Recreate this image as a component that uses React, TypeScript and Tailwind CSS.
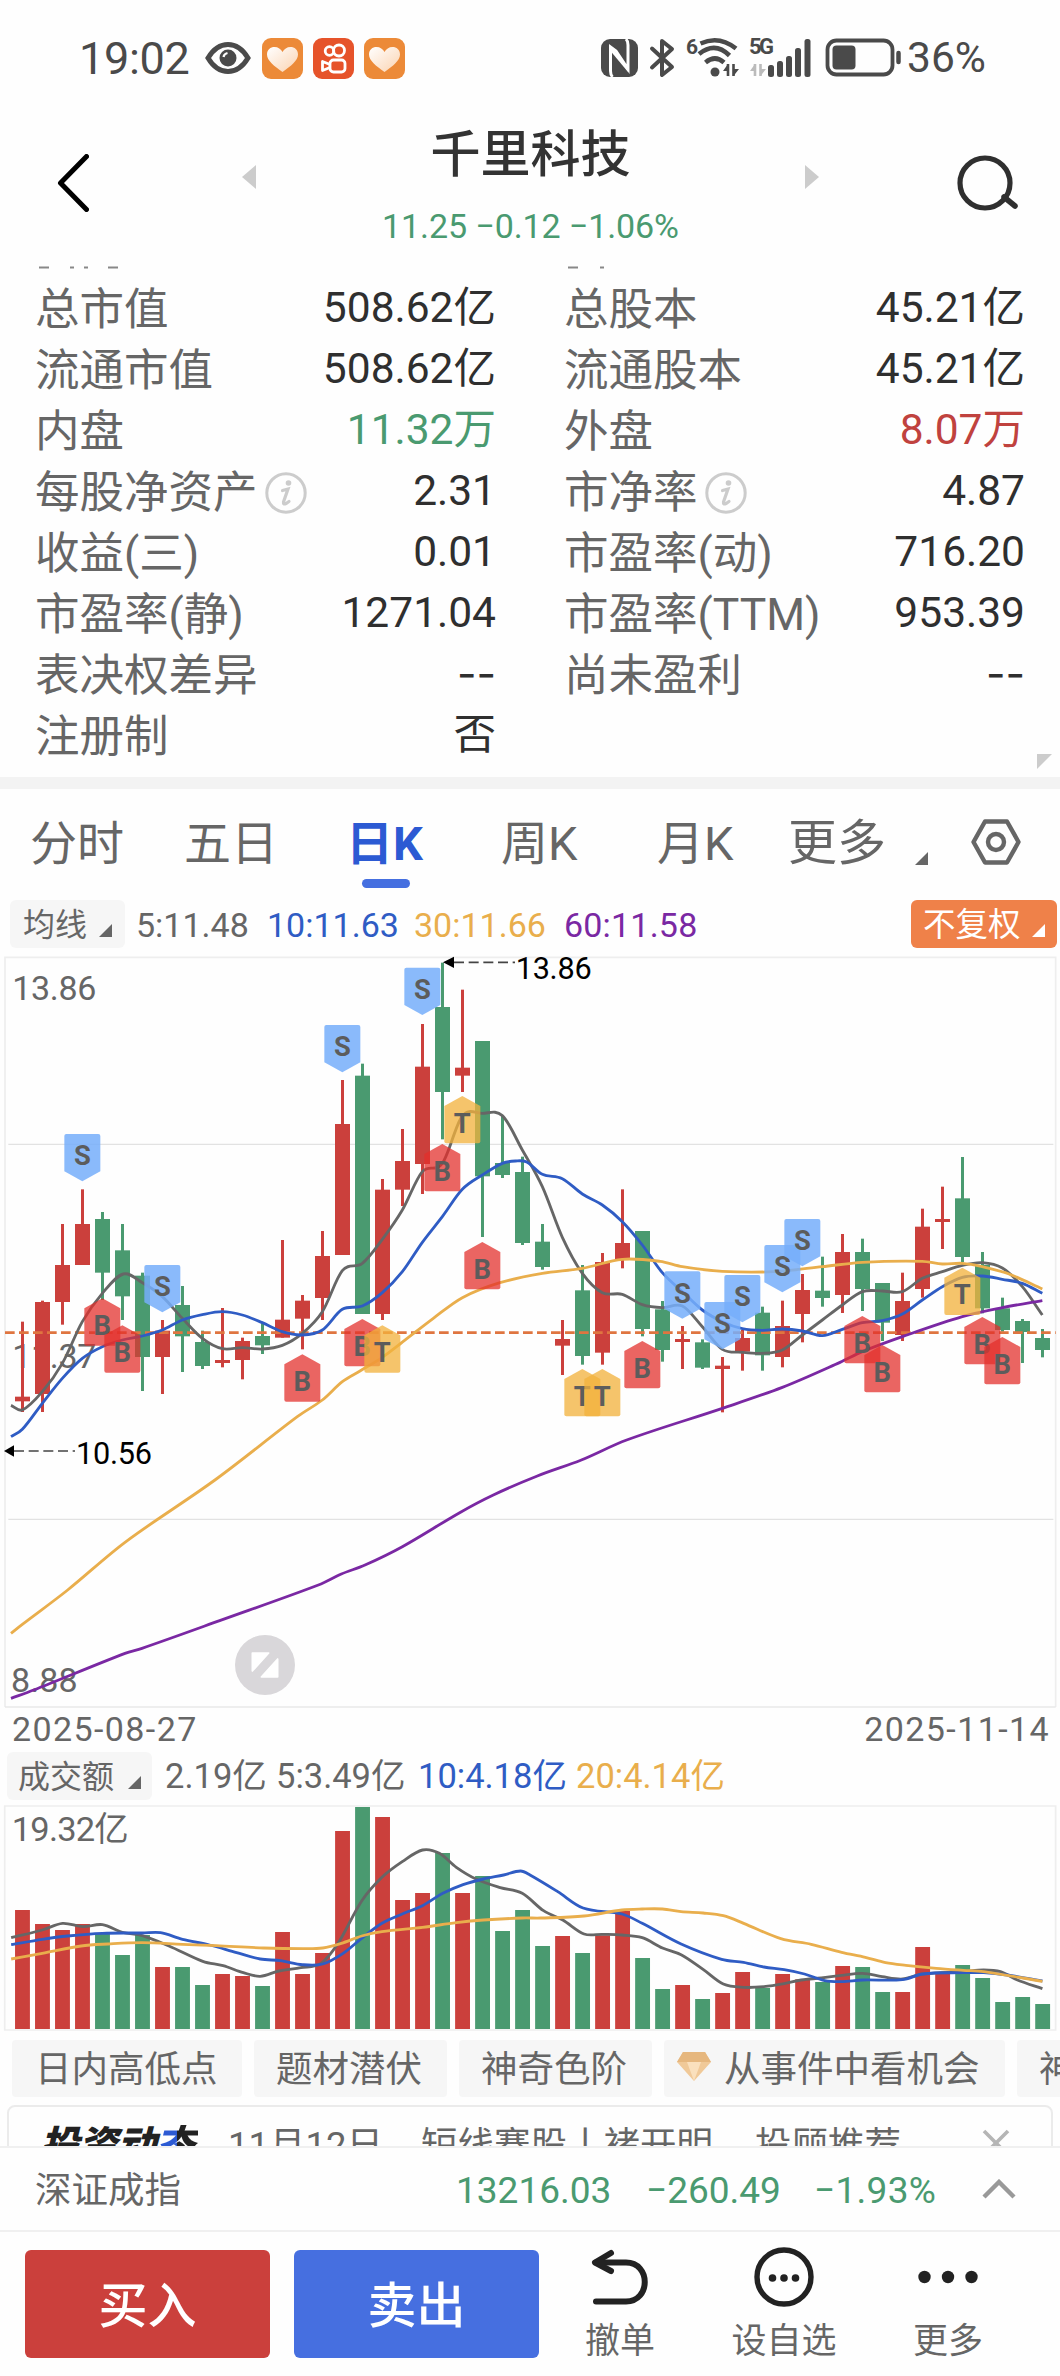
import { ReactNode } from "react";
import clsx from "clsx";

const RED = "#cb403c";
const GREEN = "#4a9a70";
const GRAY = "#666666";
const BLUE = "#2f5cc4";
const YELLOW = "#e9ae4c";
const PURPLE = "#7a28a3";

type Point = [number, number];

interface Stat {
    label: string;
    value: string;
    tone?: "up" | "down";
    info?: boolean;
}

const stats: Stat[][] = [
    [
        { label: "总市值", value: "508.62亿" },
        { label: "流通市值", value: "508.62亿" },
        { label: "内盘", value: "11.32万", tone: "down" },
        { label: "每股净资产", value: "2.31", info: true },
        { label: "收益(三)", value: "0.01" },
        { label: "市盈率(静)", value: "1271.04" },
        { label: "表决权差异", value: "--" },
        { label: "注册制", value: "否" },
    ],
    [
        { label: "总股本", value: "45.21亿" },
        { label: "流通股本", value: "45.21亿" },
        { label: "外盘", value: "8.07万", tone: "up" },
        { label: "市净率", value: "4.87", info: true },
        { label: "市盈率(动)", value: "716.20" },
        { label: "市盈率(TTM)", value: "953.39" },
        { label: "尚未盈利", value: "--" },
    ],
];

// [rising, high, body top, body bottom, low]
const candles: [number, number, number, number, number][] = [
    [1, 1115, 1340, 1354, 1386], [1, 1052, 1056, 1332, 1386], [1, 822, 945, 1056, 1124], [1, 718, 822, 945, 945],
    [0, 786, 807, 968, 1050], [0, 822, 901, 1039, 1110], [0, 968, 977, 1221, 1323], [1, 1110, 1142, 1221, 1332],
    [0, 1008, 1065, 1159, 1266], [0, 1142, 1176, 1248, 1257], [1, 1074, 1230, 1239, 1252], [1, 1163, 1173, 1230, 1288],
    [0, 1120, 1158, 1186, 1212], [1, 870, 1109, 1163, 1163], [1, 1035, 1052, 1106, 1198], [1, 843, 918, 1044, 1110],
    [1, 390, 522, 915, 915], [0, 341, 377, 1092, 1092], [1, 687, 719, 1092, 1110], [1, 537, 633, 719, 768],
    [1, 222, 350, 642, 732], [0, 38, 171, 426, 568], [1, 119, 353, 377, 426], [0, 273, 273, 679, 861],
    [0, 497, 639, 675, 684], [0, 620, 666, 879, 885], [0, 822, 875, 951, 959], [1, 1110, 1167, 1187, 1275],
    [0, 945, 1021, 1218, 1244], [1, 909, 936, 1208, 1244], [1, 718, 879, 930, 955], [0, 843, 843, 1137, 1159],
    [0, 1053, 1078, 1200, 1235], [1, 1128, 1167, 1176, 1257], [0, 1168, 1177, 1253, 1257], [1, 1221, 1247, 1257, 1387],
    [1, 1140, 1164, 1205, 1262], [0, 1070, 1088, 1216, 1262], [1, 1052, 1128, 1221, 1252], [1, 972, 1020, 1092, 1177],
    [0, 920, 1022, 1044, 1070], [1, 852, 906, 1035, 1089], [0, 866, 906, 1017, 1083], [0, 999, 999, 1118, 1173],
    [1, 968, 1053, 1155, 1173], [1, 776, 830, 1017, 1043], [1, 710, 807, 816, 897], [0, 621, 745, 921, 936],
    [0, 906, 945, 1075, 1090], [0, 1043, 1075, 1140, 1145], [0, 1107, 1113, 1146, 1239], [0, 1137, 1164, 1200, 1222],
];

const ma5: Point[] = [
    [33, 1366], [67, 1380], [127, 1325], [187, 1240], [247, 1115], [307, 1030], [370, 972], [430, 1000], [487, 1040],
    [547, 1105], [607, 1165], [667, 1196], [727, 1193], [787, 1197], [847, 1186], [907, 1150], [967, 1085], [1027, 962],
    [1087, 940], [1147, 868], [1207, 780], [1267, 665], [1327, 640], [1387, 498], [1447, 490], [1507, 497], [1567, 600],
    [1627, 710], [1687, 862], [1747, 970], [1807, 1028], [1867, 1033], [1927, 1064], [1987, 1073], [2047, 1068],
    [2107, 1130], [2167, 1198], [2227, 1207], [2287, 1210], [2347, 1200], [2407, 1155], [2467, 1110], [2527, 1065],
    [2587, 1025], [2647, 1023], [2707, 1025], [2767, 985], [2827, 965], [2887, 946], [2947, 938], [3007, 954],
    [3067, 1010], [3127, 1095],
];
const ma10: Point[] = [
    [33, 1460], [67, 1438], [127, 1360], [187, 1285], [247, 1225], [307, 1190], [367, 1170], [427, 1158], [487, 1140],
    [547, 1110], [607, 1094], [667, 1085], [727, 1095], [787, 1118], [847, 1145], [907, 1155], [967, 1140], [1027, 1078],
    [1087, 1068], [1147, 1028], [1207, 965], [1267, 877], [1327, 800], [1387, 718], [1447, 675], [1507, 640],
    [1547, 633], [1580, 636], [1627, 673], [1687, 686], [1747, 732], [1807, 765], [1867, 815], [1927, 885], [1987, 968],
    [2047, 1025], [2107, 1080], [2167, 1115], [2227, 1136], [2287, 1141], [2347, 1137], [2407, 1143], [2467, 1157],
    [2527, 1138], [2587, 1118], [2647, 1112], [2707, 1092], [2767, 1050], [2827, 1010], [2887, 982], [2947, 978],
    [3007, 988], [3067, 1000], [3127, 1030],
];
const ma30: Point[] = [
    [33, 2050], [67, 2023], [203, 1920], [375, 1777], [649, 1587], [892, 1400], [967, 1350], [1027, 1295],
    [1080, 1263], [1147, 1222], [1200, 1182], [1300, 1105], [1387, 1043], [1500, 998], [1627, 970], [1747, 955],
    [1867, 928], [1980, 934], [2047, 950], [2167, 964], [2320, 965], [2467, 950], [2587, 937], [2767, 934],
    [2827, 942], [2887, 940], [2947, 950], [3027, 972], [3127, 1017],
];
const ma60: Point[] = [
    [33, 2245], [101, 2220], [375, 2110], [426, 2095], [659, 2012], [963, 1902], [1024, 1872], [1095, 1845],
    [1207, 1790], [1379, 1688], [1480, 1635], [1612, 1578], [1744, 1530], [1880, 1470], [2167, 1375], [2347, 1312],
    [2520, 1237], [2587, 1205], [2707, 1160], [2887, 1100], [3007, 1073], [3127, 1052],
];

const marks: ["S" | "B" | "T", number, number][] = [
    ["S", 247, 552], ["B", 307, 1045], ["B", 367, 1126], ["S", 487, 945], ["B", 907, 1213], ["S", 1027, 225],
    ["B", 1087, 1107], ["T", 1147, 1126], ["S", 1267, 53], ["B", 1327, 582], ["T", 1387, 438], ["B", 1447, 876],
    ["T", 1747, 1257], ["T", 1807, 1257], ["B", 1927, 1173], ["S", 2047, 964], ["S", 2167, 1056], ["S", 2227, 975],
    ["S", 2347, 885], ["S", 2407, 807], ["B", 2587, 1098], ["B", 2647, 1185], ["T", 2887, 953], ["B", 2947, 1101],
    ["B", 3007, 1161],
];

// [rising, bar top]
const volumes: Point[] = [
    [1, 360], [1, 402], [1, 420], [1, 402], [0, 432], [0, 495], [0, 435], [1, 531], [0, 531], [0, 585], [1, 552],
    [1, 558], [0, 588], [1, 426], [1, 552], [1, 489], [1, 123], [0, 51], [1, 81], [1, 330], [1, 309], [0, 189],
    [1, 309], [0, 258], [0, 423], [0, 360], [0, 468], [1, 438], [0, 489], [1, 436], [1, 363], [0, 504], [0, 597],
    [1, 585], [0, 627], [1, 609], [1, 546], [0, 594], [1, 552], [1, 568], [0, 576], [1, 528], [0, 531], [0, 606],
    [1, 606], [1, 471], [1, 546], [0, 525], [0, 564], [0, 636], [0, 621], [0, 642],
];
const vol5: Point[] = [
    [33, 443], [125, 420], [185, 400], [245, 410], [303, 404], [362, 427], [421, 437], [500, 468], [600, 514],
    [660, 527], [720, 548], [770, 559], [825, 543], [890, 533], [950, 520], [1000, 460], [1070, 333], [1130, 262],
    [1190, 215], [1250, 180], [1300, 190], [1350, 232], [1410, 268], [1480, 293], [1545, 310], [1608, 362],
    [1665, 390], [1728, 432], [1782, 433], [1840, 435], [1900, 443], [1960, 474], [2015, 494], [2080, 538],
    [2140, 582], [2200, 592], [2260, 590], [2320, 581], [2370, 570], [2430, 564], [2490, 556], [2552, 550],
    [2610, 560], [2670, 567], [2730, 552], [2850, 545], [2910, 540], [2960, 545], [3010, 570], [3084, 596],
];
const vol10: Point[] = [
    [33, 464], [125, 448], [200, 438], [303, 430], [421, 429], [475, 428], [540, 448], [620, 465], [700, 488],
    [770, 507], [830, 512], [895, 524], [955, 522], [1015, 490], [1070, 445], [1130, 400], [1190, 372], [1250, 347],
    [1310, 310], [1370, 284], [1430, 267], [1490, 255], [1540, 243], [1568, 255], [1650, 305], [1725, 354],
    [1840, 372], [1900, 400], [2015, 462], [2135, 508], [2200, 517], [2260, 531], [2320, 539], [2380, 552],
    [2440, 572], [2490, 575], [2552, 570], [2670, 569], [2730, 552], [2850, 548], [2910, 548], [2980, 555],
    [3084, 573],
];
const vol20: Point[] = [
    [33, 507], [125, 490], [240, 468], [320, 462], [420, 458], [540, 463], [640, 467], [780, 474], [895, 476],
    [955, 474], [1010, 460], [1070, 438], [1130, 425], [1250, 412], [1350, 398], [1430, 390], [1545, 384],
    [1600, 384], [1728, 378], [1840, 360], [1900, 357], [1960, 357], [2015, 365], [2080, 369], [2140, 377],
    [2200, 400], [2310, 446], [2400, 463], [2490, 487], [2560, 502], [2620, 518], [2680, 526], [2770, 535],
    [2850, 541], [2910, 545], [3084, 574],
];

function smooth(points: Point[]) {
    let d = `M${points[0][0]} ${points[0][1]}`;
    for (let i = 0; i < points.length - 1; i++) {
        const p0 = points[i - 1] ?? points[i];
        const p1 = points[i];
        const p2 = points[i + 1];
        const p3 = points[i + 2] ?? p2;
        // handles never reach past a third of the segment, so uneven spacing does not bulge
        const span = p2[0] - p1[0];
        const s1 = (p2[1] - p0[1]) / (p2[0] - p0[0]);
        const s2 = (p3[1] - p1[1]) / (p3[0] - p1[0]);
        d += ` C${p1[0] + span / 3} ${p1[1] + (s1 * span) / 3} ${p2[0] - span / 3} ${p2[1] - (s2 * span) / 3} ${p2[0]} ${p2[1]}`;
    }
    return d;
}

function Line({ points, color }: { points: Point[]; color: string }) {
    return <path d={smooth(points)} fill="none" stroke={color} strokeWidth={8.500} strokeLinejoin="round" />;
}

function HeartApp() {
    return (
        <svg viewBox="0 0 41 41" className="h-[41px] w-[41px]">
            <defs>
                <linearGradient id="heart" x1="0" y1="0" x2="1" y2="1">
                    <stop offset="0" stopColor="#fff" />
                    <stop offset="1" stopColor="#fbd3b0" />
                </linearGradient>
            </defs>
            <rect width="41" height="41" rx="9" fill="#ec8a38" />
            <path d="M20.500 34C12 28 5 22.500 5 16.500C5 11.500 8.500 9 12.500 9C16 9 19 11 20.500 14C22 11 25 9 28.500 9C32.500 9 36 11.500 36 16.500C36 22.500 29 28 20.500 34Z" fill="url(#heart)" />
        </svg>
    );
}

function StatusBar() {
    return (
        <div className="flex h-[116px] items-center pl-[79px] text-[#4a4a4a]">
            <span className="w-[126px] text-[45px] leading-none tracking-[-0.3px]">19:02</span>
            <svg viewBox="0 0 46 32" className="h-8 w-[46px]">
                <path d="M3 16C9 6 16 2.500 23 2.500S37 6 43 16C37 26 30 29.500 23 29.500S9 26 3 16Z" fill="none" stroke="#4a4a4a" strokeWidth="5" />
                <circle cx="23" cy="16" r="8.500" fill="#4a4a4a" />
                <path d="M18.500 15C19 12.500 20.500 11.500 22.500 11" fill="none" stroke="#fff" strokeWidth="2.200" />
            </svg>
            <div className="ml-[11px] flex gap-[10px]">
                <HeartApp />
                <svg viewBox="0 0 41 41" className="h-[41px] w-[41px]">
                    <rect width="41" height="41" rx="9" fill="#e6532a" />
                    <g fill="none" stroke="#fff" strokeWidth="2.800">
                        <circle cx="16.500" cy="13" r="4.300" />
                        <circle cx="26" cy="12.500" r="5.500" />
                        <rect x="17" y="22" width="15" height="12" rx="3.500" />
                        <path d="M17 26.500L9.500 23.500V32.500L17 29.500" strokeLinejoin="round" />
                    </g>
                </svg>
                <HeartApp />
            </div>
            <svg viewBox="0 0 302 44" className="ml-[195px] h-[44px] w-[302px]">
                {/* nfc */}
                <rect x="1" y="3" width="37" height="38" rx="9" fill="#4a4a4a" />
                <path d="M12.500 41Q10.500 39 10.500 35V11L16 15L28 33V9Q28 5 26 3" fill="none" stroke="#fff" strokeWidth="3" />
                <path d="M10.500 10L28 31V36L10.500 15Z" fill="#fff" />
                {/* bluetooth */}
                <path d="M52 12.500L72 31L62 39V5L72 13L52 31.500" fill="none" stroke="#4a4a4a" strokeWidth="4" strokeLinejoin="round" strokeLinecap="round" />
                <text x="86" y="17.500" fontSize="21" fontWeight="700" fill="#4a4a4a">6</text>
                {/* wifi */}
                <g fill="none" stroke="#4a4a4a" strokeWidth="4.600">
                    <path d="M100.500 7.500Q119 -1 136 12.500" />
                    <path d="M99 18Q115 5 129.500 19.500" />
                    <path d="M105.500 26.500Q115 18.500 124 26.500" />
                </g>
                <circle cx="115" cy="36" r="4.500" fill="#4a4a4a" />
                <path d="M128 28V40M133.500 40V28" stroke="#4a4a4a" strokeWidth="2.600" />
                <path d="M128 28V35H123ZM133.500 40V33H139Z" fill="#4a4a4a" />
                <text x="149" y="18" fontSize="22" fontWeight="700" fill="#4a4a4a" textLength="25">5G</text>
                <path d="M155 28V40M160.500 40V28" stroke="#bbb" strokeWidth="2.600" />
                <path d="M155 28V35H150ZM160.500 40V33H166Z" fill="#bbb" />
                {[[168, 29], [177, 25], [186, 20], [195, 12], [204.500, 3]].map(([x, y]) => (
                    <rect key={x} x={x} y={y} width="6" height={41 - y} rx="2.500" fill="#4a4a4a" />
                ))}
                {/* battery */}
                <rect x="227.500" y="4.500" width="65" height="34" rx="9" fill="none" stroke="#4a4a4a" strokeWidth="3.800" />
                <rect x="232.500" y="9.500" width="23" height="24" rx="4" fill="#4a4a4a" />
                <path d="M298.500 17V26" stroke="#4a4a4a" strokeWidth="4.500" strokeLinecap="round" />
            </svg>
            <span className="ml-[5px] text-[42.5px] leading-none">36%</span>
        </div>
    );
}

function Header() {
    return (
        <div className="flex h-[150px] items-start">
            <svg viewBox="0 0 32 58" className="ml-[57px] mt-[38px] h-[58px] w-8">
                <path d="M29.500 2.500L3.500 29L29.500 55.500" fill="none" stroke="#000" strokeWidth="5" strokeLinecap="round" strokeLinejoin="round" />
            </svg>
            <svg viewBox="0 0 14 24" className="ml-[153px] mt-[49px] h-6 w-[14px]">
                <path d="M14 0V24L0 12Z" fill="#ccc" />
            </svg>
            <div className="flex w-[549px] flex-col items-center">
                <h1 className="mt-[14px] text-[50px] font-medium leading-none text-[#333]">千里科技</h1>
                <div className="mt-[29px] text-[34px] leading-none tracking-[-0.1px] text-[#4a9a70]">11.25 −0.12 −1.06%</div>
            </div>
            <svg viewBox="0 0 14 24" className="mt-[49px] h-6 w-[14px]">
                <path d="M0 0V24L14 12Z" fill="#ccc" />
            </svg>
            <svg viewBox="0 0 62 58" className="ml-[138px] mt-[38px] h-[58px] w-[62px]">
                <circle cx="28" cy="29" r="25" fill="none" stroke="#2f2f2f" strokeWidth="5.200" />
                <path d="M47 43L58 52" stroke="#2f2f2f" strokeWidth="5.500" strokeLinecap="round" />
            </svg>
        </div>
    );
}

function InfoIcon() {
    return (
        <svg viewBox="0 0 42 42" className="ml-[7px] h-[42px] w-[42px]">
            <circle cx="21" cy="21" r="19.200" fill="none" stroke="#ccc" strokeWidth="3" />
            <circle cx="23.500" cy="11" r="2.800" fill="#ccc" />
            <path d="M17.500 18.500L23 17L18.500 30Q18 33 21 31.500L24 29.500" fill="none" stroke="#ccc" strokeWidth="3.200" strokeLinecap="round" />
        </svg>
    );
}

function Stats() {
    return (
        <section className="h-[511px] overflow-hidden">
            {/* lower edge of the row that is scrolled under the header */}
            <svg viewBox="0 0 1060 3" className="block h-[3px] w-full">
                <path d="M39 1.500H49M70 1.500H74M84 1.500H88M108 1.500H118M568 1.500H578M600 1.500H604" stroke="#888" strokeWidth="1.800" />
            </svg>
            <div className="flex gap-[68px] pl-[35px] pt-[9px]">
                {stats.map((column, i) => (
                    <div key={i} className="w-[461px]">
                        {column.map((stat) => (
                            <div key={stat.label} className="flex h-[61px] items-center justify-between leading-none">
                                <span className="flex items-center pt-[3px] text-[44.5px] text-[#666]">
                                    {stat.label}
                                    {stat.info && <InfoIcon />}
                                </span>
                                <span
                                    className={clsx(
                                        "text-[42.5px]",
                                        stat.value === "--" && "font-['Inter']",
                                        stat.tone === "up" ? "text-[#c0423e]" : stat.tone === "down" ? "text-[#4a9a70]" : "text-[#2f2f2f]"
                                    )}
                                >
                                    {stat.value}
                                </span>
                            </div>
                        ))}
                    </div>
                ))}
            </div>
            <div className="flex justify-end pr-2">
                <svg viewBox="0 0 15 15" className="-mt-[12px] h-[15px] w-[15px]">
                    <path d="M0 0H15L0 15Z" fill="#ccc" />
                </svg>
            </div>
        </section>
    );
}

function Corner({ className }: { className: string }) {
    return (
        <svg viewBox="0 0 13 13" className={clsx("h-[13px] w-[13px]", className)}>
            <path d="M13 0V13H0Z" fill="currentColor" />
        </svg>
    );
}

function Tabs() {
    return (
        <div className="flex h-[106px] items-center pl-[30px] pt-[2px] text-[47px] leading-none text-[#666]">
            <span className="w-[154px]">分时</span>
            <span className="w-[162px]">五日</span>
            <span className="relative w-[155px] font-bold text-[#2c5ad3]">
                日K
                <i className="absolute left-[16px] top-[59px] h-[9px] w-[48px] rounded-full bg-[#456fe0]" />
            </span>
            <span className="w-[156px]">周K</span>
            <span className="w-[131px]">月K</span>
            <span className="w-[127px] text-[49px]">更多</span>
            <Corner className="mt-[31px]" />
            <svg viewBox="0 0 50 46" className="-mt-[2px] ml-[43px] h-[46px] w-[50px]">
                <path d="M14 2.500H36L47.500 23L36 43.500H14L2.500 23Z" fill="none" stroke="#666" strokeWidth="4.400" strokeLinejoin="round" />
                <circle cx="25" cy="23" r="8" fill="none" stroke="#666" strokeWidth="4.400" />
            </svg>
        </div>
    );
}

function Selector({ children, className }: { children: ReactNode; className: string }) {
    return (
        <div className={clsx("flex h-[48px] items-center justify-between rounded-md leading-none", className)}>
            <span className="pt-[2px]">{children}</span>
            <Corner className="mt-[13px]" />
        </div>
    );
}

function KChart() {
    return (
        <svg viewBox="0 0 3180 2280" className="block h-[760px] w-full">
            <path d="M15 2271V22H3167V2271" fill="none" stroke="#eeeeee" strokeWidth="5" />
            <path d="M25 583H3160M25 1708H3160" stroke="#e2e2e2" strokeWidth="3.500" />
            <path d="M15 2271H3167" stroke="#e8e8e8" strokeWidth="5" />
            <g fill={GRAY} fontSize="102">
                <text x="37" y="150" textLength="252">13.86</text>
                <text x="37" y="1254" textLength="252">11.37</text>
                <text x="33" y="2227" textLength="200">8.88</text>
            </g>
            {candles.map(([rising, high, top, bottom, low], i) => {
                const x = 67.500 + i * 60;
                return (
                    <g key={i} fill={rising ? RED : GREEN}>
                        <rect x={x - 4.500} y={high} width="9" height={low - high} />
                        <rect x={x - 22.500} y={top} width="45" height={bottom - top} />
                    </g>
                );
            })}
            <path d="M15 1148H3167" stroke="#df7540" strokeWidth="8" strokeDasharray="29 13" />
            <Line points={ma5} color={GRAY} />
            <Line points={ma10} color={BLUE} />
            <Line points={ma30} color={YELLOW} />
            <Line points={ma60} color={PURPLE} />
            {marks.map(([kind, x, y], i) => (
                <g key={i} transform={`translate(${x - 54} ${y})`}>
                    {kind === "S" ? (
                        <path d="M6 0H102Q108 0 108 6V112L54 142L0 112V6Q0 0 6 0Z" fill="#76aefa" fillOpacity="0.85" />
                    ) : (
                        <path
                            d="M54 0L108 30V136Q108 142 102 142H6Q0 142 0 136V30Z"
                            fill={kind === "B" ? "#e32f2b" : "#f2b23c"}
                            fillOpacity={kind === "B" ? 0.74 : 0.76}
                        />
                    )}
                    <text x="54" y={kind === "S" ? 94 : 110} fontSize="82" fontWeight="700" textAnchor="middle" fill="#5c5c5c">
                        {kind}
                    </text>
                </g>
            ))}
            <g fill="#000">
                <path d="M1329 37L1362 20V54Z" />
                <path d="M12 1503L42 1486V1520Z" />
                <text x="1547" y="86" fontSize="92" textLength="228">13.86</text>
                <text x="228" y="1541" fontSize="92" textLength="228">10.56</text>
            </g>
            <path d="M1362 37H1545M42 1503H225" stroke="#444" strokeWidth="5" strokeDasharray="30 14" />
            <circle cx="795" cy="2145" r="90" fill="#d9d7da" />
            <path d="M757 2109H806L757 2163ZM833 2181H784L833 2127Z" fill="#fff" stroke="#fff" strokeWidth="5" strokeLinejoin="round" />
        </svg>
    );
}

function VolumeChart() {
    return (
        <svg viewBox="0 39 3136 696" preserveAspectRatio="none" className="block h-[232px] w-full">
            <path d="M14 48H3123V720H14Z" fill="none" stroke="#eeeeee" strokeWidth="5" />
            <text x="35" y="153" fontSize="102" fill={GRAY} textLength="346">19.32亿</text>
            {volumes.map(([rising, top], i) => (
                <rect key={i} x={44.500 + i * 59.180} y={top} width="44" height={717 - top} fill={rising ? RED : GREEN} />
            ))}
            <Line points={vol5} color={GRAY} />
            <Line points={vol10} color={BLUE} />
            <Line points={vol20} color={YELLOW} />
        </svg>
    );
}

function Chips() {
    const chip = "flex h-[57px] shrink-0 items-center rounded-sm bg-[#f6f6f6] pt-[4px]";
    return (
        <div className="flex gap-[12px] overflow-hidden pl-[12px] pt-[5px] text-[36.5px] leading-none text-[#666]">
            <span className={clsx(chip, "w-[230px] pl-[23px]")}>日内高低点</span>
            <span className={clsx(chip, "w-[193px] pl-[22px]")}>题材潜伏</span>
            <span className={clsx(chip, "w-[193px] pl-[22px]")}>神奇色阶</span>
            <span className={clsx(chip, "w-[341px] gap-[13px] pl-[13px]")}>
                <svg viewBox="0 0 34 29" className="-mt-[8px] h-[29px] w-[34px]">
                    <path d="M6 0H28L34 10L17 29L0 10Z" fill="#f0c998" />
                    <path d="M6 0H28L34 10H0Z" fill="#e6b77e" />
                    <path d="M10 10L17 29L24 10Z" fill="#fae0bd" />
                </svg>
                从事件中看机会
            </span>
            <span className={clsx(chip, "w-[230px] pl-[22px]")}>神</span>
        </div>
    );
}

function NewsBar() {
    return (
        <div className="mt-2 h-[41px] overflow-hidden px-[7px]">
            <div className="flex h-20 items-center whitespace-pre rounded-lg border-2 border-[#ebebeb] pl-[31px] pt-[2px] text-[36.5px] leading-none text-[#666]">
                <b className="w-[188px] text-[39px] font-black italic tracking-[-0.5px] text-[#222]">
                    投资动<span className="bg-linear-to-r from-[#2c5ad3] from-50% to-[#222] to-50% bg-clip-text pr-1 text-transparent">态</span>
                </b>
                <span className="w-[193px]">11月12日</span>
                <span className="w-[334px]">短线赛股丨褚开明</span>
                <span className="w-[227px]">投顾推荐</span>
                <svg viewBox="0 0 28 28" className="-mt-[6px] h-7 w-7">
                    <path d="M2 2L26 26M26 2L2 26" stroke="#b5b5b5" strokeWidth="3.600" />
                </svg>
            </div>
        </div>
    );
}

function IndexBar() {
    return (
        <div className="flex h-[86px] items-center border-y-2 border-[#f0f0f0] pl-[35px] pt-[2px] text-[37px] leading-none text-[#4a9a70]">
            <span className="w-[421px] pt-[2px] text-[36.5px] text-[#666]">深证成指</span>
            <span className="w-[190px]">13216.03</span>
            <span className="w-[168px]">−260.49</span>
            <span className="w-[168px] tracking-[0.3px]">−1.93%</span>
            <svg viewBox="0 0 34 20" className="-mt-[3px] h-5 w-[34px]">
                <path d="M2 18L17 3L32 18" fill="none" stroke="#999" strokeWidth="4.400" />
            </svg>
        </div>
    );
}

function Action({ label, className, children }: { label: string; className: string; children: ReactNode }) {
    return (
        <button className={clsx("flex flex-col items-center gap-[17px] text-[35px] leading-none text-[#666]", className)}>
            <svg viewBox="0 0 60 60" className="h-[60px] w-[60px]">
                {children}
            </svg>
            {label}
        </button>
    );
}

function BottomBar() {
    const trade = "mt-[3px] h-[108px] w-[245px] rounded-md pt-[4px] text-[49px] font-medium leading-none text-white";
    return (
        <div className="flex items-start pl-[25px] pt-[15px]">
            <button className={clsx(trade, "bg-[#cb403c]")}>买入</button>
            <button className={clsx(trade, "ml-6 bg-[#466fe0]")}>卖出</button>
            <Action label="撤单" className="ml-[36px] w-[90px]">
                <g fill="none" stroke="#222" strokeWidth="6" strokeLinecap="round" strokeLinejoin="round">
                    <path d="M21 6L5 15.500L21 24" />
                    <path d="M6 15.500H36C61 15.500 61 54.500 36 54.500H6" />
                </g>
            </Action>
            <Action label="设自选" className="ml-[54px] w-[130px]">
                <circle cx="30" cy="30" r="27" fill="none" stroke="#222" strokeWidth="5.400" />
                {[18.500, 30, 41.500].map((x) => (
                    <circle key={x} cx={x} cy="31" r="3.800" fill="#222" />
                ))}
            </Action>
            <Action label="更多" className="ml-[54px] w-[90px]">
                {[6.500, 30, 53.500].map((x) => (
                    <circle key={x} cx={x} cy="30" r="6.200" fill="#222" />
                ))}
            </Action>
        </div>
    );
}

export default function App() {
    return (
        <div className="h-[2376px] w-[1060px] overflow-hidden bg-[#fefefe] font-['Roboto','Noto_Sans_CJK_SC',sans-serif]">
            <StatusBar />
            <Header />
            <Stats />
            <div className="h-3 bg-[#f3f3f3]" />
            <Tabs />
            <div className="flex h-[55px] items-center pl-[10px] pr-[3px] pt-[3px] text-[34px] leading-none">
                <Selector className="w-[115px] bg-[#f6f6f6] pl-[13px] pr-[13px] text-[32px] text-[#666]">均线</Selector>
                <span className="ml-[11px] w-[131px] pt-[2px] text-[#666]">5:11.48</span>
                <span className="w-[147px] pt-[2px] text-[#2f5cc4]">10:11.63</span>
                <span className="w-[150px] pt-[2px] text-[#e9ae4c]">30:11.66</span>
                <span className="pt-[2px] text-[#7a28a3] tracking-[0.2px]">60:11.58</span>
                <Selector className="ml-auto w-[146px] bg-[#ef8149] pl-[12px] pr-[12px] text-[32.5px] text-white">不复权</Selector>
            </div>
            <KChart />
            <div className="flex h-[38px] items-center justify-between pl-[12px] pr-[10px] text-[34px] leading-none tracking-[1.4px] text-[#666]">
                <span>2025-08-27</span>
                <span>2025-11-14</span>
            </div>
            <div className="flex h-[55px] items-center pl-[7px] text-[34.5px] leading-none">
                <Selector className="w-[145px] bg-[#f6f6f6] pl-[11px] pr-[11px] text-[32px] text-[#666]">成交额</Selector>
                <span className="ml-[13px] w-[111px] pt-[2px] text-[#666]">2.19亿</span>
                <span className="w-[142px] pt-[2px] text-[#666]">5:3.49亿</span>
                <span className="w-[158px] pt-[2px] text-[#2f5cc4]">10:4.18亿</span>
                <span className="pt-[2px] text-[#e9ae4c]">20:4.14亿</span>
            </div>
            <VolumeChart />
            <Chips />
            <NewsBar />
            <IndexBar />
            <BottomBar />
        </div>
    );
}
